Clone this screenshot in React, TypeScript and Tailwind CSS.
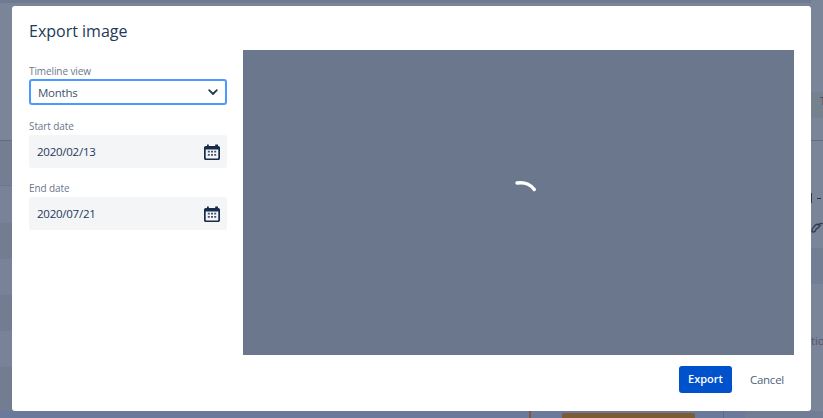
import React from "react";

function CalendarIcon() {
  return (
    <svg width="16" height="16" viewBox="0 0 16 16" className="shrink-0">
      <path fill="#172B4D" fillRule="evenodd" d="M3 0.500h1.800V2h6.400V0.500H14V2h.2C15.200 2 16 2.800 16 3.800v10.400c0 1-.8 1.800-1.800 1.800H1.800C.8 16 0 15.200 0 14.200V3.800C0 2.800.8 2 1.800 2H2h1V0.500zM1.700 5.500v8.500c0 .2.200.4.400.4h11.800c.2 0 .4-.2.400-.4V5.500H1.700z" />
      <path fill="#42526E" d="M3.800 6.800h2v1.800h-2zM7 6.800h2v1.800H7zM10.200 6.800h2v1.800h-2zM3.800 10h2v1.800h-2zM7 10h2v1.800H7zM10.200 10h2v1.800h-2z" />
    </svg>
  );
}

function Chevron() {
  return (
    <svg width="10" height="7" viewBox="0 0 10 7" className="shrink-0">
      <path d="M1.200 1.200 5 5l3.800-3.800" fill="none" stroke="#253858" strokeWidth="1.800" strokeLinecap="round" strokeLinejoin="round" />
    </svg>
  );
}

function DateField({ label, value }: { label: string; value: string }) {
  return (
    <div className="flex flex-col">
      <label className="text-[10px] leading-[14px] h-[14px] tracking-[-0.1px] text-[#6b778c]">{label}</label>
      <div className="mt-[2px] h-[33px] rounded-[3px] bg-[#f4f5f7] flex items-center justify-between pl-[8px] pr-[7px] text-[11.5px] tracking-[-0.25px] text-[#253858]">
        <span>{value}</span>
        <CalendarIcon />
      </div>
    </div>
  );
}

function Backdrop() {
  return (
    <div className="w-[823px] h-[418px] flex flex-col bg-[#77829a]">
      <div className="flex-1 flex">
        <div className="flex-1 flex flex-col">
          <div className="h-[3px] bg-[#6f7a90]" />
          <div className="h-[138px] bg-[#7a8599] border-b border-[#636d82]" />
          <div className="h-[45px] bg-[#737e93] border-b border-[#6c768b]" />
          <div className="h-[37px] bg-[#78839a]" />
          <div className="h-[36px] bg-[#727d92]" />
          <div className="h-[36px] bg-[#78839a]" />
          <div className="h-[36px] bg-[#727d92]" />
          <div className="h-[36px] bg-[#78839a]" />
          <div className="flex-1 bg-[#727d92]" />
        </div>
        <div className="w-[12px] flex flex-col bg-[#7a8599] overflow-hidden text-[11px] leading-[14px] text-[#3f4a60]">
          <div className="h-[92px]" />
          <div className="h-[26px] pl-[9px] pt-[2px] bg-[#76818f]">T</div>
          <div className="h-[23px] border-b border-[#646e83]" />
          <div className="h-[52px]" />
          <div className="h-[12px] flex gap-[2px]">
            <div className="w-[1px] h-[10px] bg-[#2b3547]" />
            <div className="w-[4px] h-[1px] mt-[5px] ml-[3px] bg-[#2b3547]" />
          </div>
          <div className="h-[15px]" />
          <div className="h-[24px]">
            <svg width="12" height="16" viewBox="0 0 12 16">
              <path d="M1.500 12c-1.500-1.500 1-5 2.500-6.500s4-1.500 4-.5M7 5.500c1.500-2 3.500-2.500 4.500-1.500M5 10c-1 1.500-2 2.500-3.500 2M4.500 9.500c1.500-.5 4-2.500 5-4.500" fill="none" stroke="#2f3a52" strokeWidth="1.400" />
            </svg>
          </div>
          <div className="h-[4px]" />
          <div className="h-[36px] rounded-l-[3px] ml-[-4px] bg-[#727e93]" />
          <div className="h-[50px]" />
          <div className="h-[24px] whitespace-nowrap text-[#4e586d]">tion</div>
        </div>
      </div>
      <div className="h-[7px] flex bg-[#6b7a9a]">
        <div className="ml-[529px] w-[2px] bg-[#7d5c34]" />
        <div className="ml-[31px] mt-[2px] w-[133px] rounded-t-[2px] bg-[#7d5c34]" />
        <div className="ml-[28px] w-[1px] bg-[#5e6b88]" />
        <div className="ml-[21px] flex-1 bg-[#717c95]" />
      </div>
    </div>
  );
}

export default function App() {
  return (
    <div
      className="relative w-[823px] h-[418px] overflow-hidden"
      style={{ fontFamily: '"Open Sans", "Noto Sans", sans-serif' }}
    >
      <Backdrop />
      <div className="absolute left-[12px] top-[6px] w-[799px] h-[405px] bg-white rounded-[3px] flex flex-col pl-[17px] pr-[17px]">
        <h1 className="h-[44px] pt-[13px] text-[16px] leading-[24px] font-medium text-[#253858]">Export image</h1>
        <div className="flex h-[305px] gap-[16px]">
          <div className="w-[198px] flex flex-col pt-[14px]">
            <label className="text-[10px] leading-[14px] tracking-[-0.1px] text-[#6b778c]">Timeline view</label>
            <div className="mt-[1px] h-[26px] rounded-[3px] border-2 border-[#4c9aff] flex items-center justify-between pl-[7px] pr-[7px] text-[11.5px] tracking-[-0.25px] text-[#42526e]">
              <span className="pt-[1px]">Months</span>
              <Chevron />
            </div>
            <div className="mt-[14px]">
              <DateField label="Start date" value="2020/02/13" />
            </div>
            <div className="mt-[13px]">
              <DateField label="End date" value="2020/07/21" />
            </div>
          </div>
          <div className="w-[551px] h-[305px] bg-[#6b778c] flex items-center justify-center">
            <svg width="30" height="16" viewBox="0 0 30 16" className="translate-x-[9px] -translate-y-[16px]">
              <path d="M4 4C8.500 3.300 12 3.800 15 5.200c3 1.400 4.800 3 6.300 5.300" fill="none" stroke="#fff" strokeWidth="3.400" strokeLinecap="round" />
            </svg>
          </div>
        </div>
        <div className="flex justify-end items-start pt-[11px] pr-[10px]">
          <button className="w-[53px] h-[27px] rounded-[3px] bg-[#0052cc] text-white text-[11px] font-semibold">Export</button>
          <button className="ml-[17px] w-[35px] h-[27px] text-right text-[11.5px] tracking-[-0.25px] text-[#505f79]">Cancel</button>
        </div>
      </div>
    </div>
  );
}
